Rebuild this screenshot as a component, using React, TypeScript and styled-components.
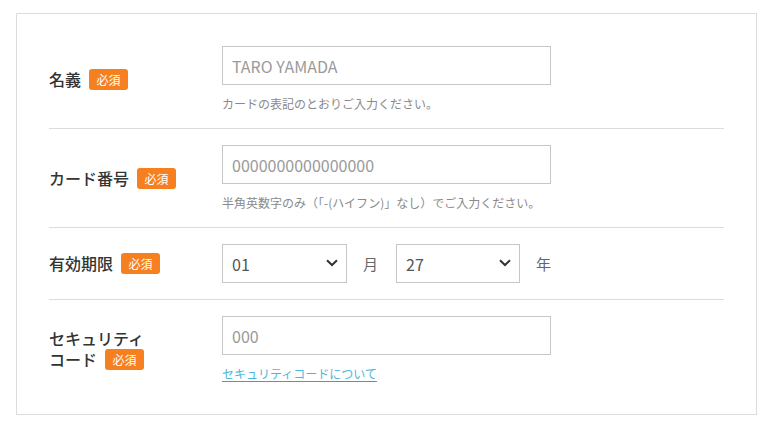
import React from "react";
import styled, { createGlobalStyle } from "styled-components";

const Global = createGlobalStyle`
  html, body { margin: 0; padding: 0; background: #fff; }
  body { font-family: "Noto Sans CJK JP", "Noto Sans", sans-serif; color: #333; }
  * { box-sizing: border-box; }
`;

const Page = styled.div`
  padding: 13px 14px 11px 16px;
`;

const Box = styled.div`
  border: 1px solid #dcdcdc;
  padding: 16px 32px;
`;

const Row = styled.div<{ $last?: boolean }>`
  display: flex;
  align-items: center;
  padding: 16px 0;
  border-bottom: ${(p) => (p.$last ? "none" : "1px solid #dcdcdc")};
`;

const LabelCol = styled.div`
  width: 173px;
  flex-shrink: 0;
  font-size: 16px;
  font-weight: 500;
  line-height: 21px;
  color: #333;
`;

const Badge = styled.span`
  display: inline-block;
  margin-left: 8px;
  padding: 0 7.5px;
  height: 21px;
  line-height: 21px;
  font-size: 12px;
  font-weight: 400;
  color: #fff;
  background: #f6801f;
  border-radius: 3px;
  vertical-align: top;
`;

const FieldCol = styled.div`
  flex: 1;
  display: flex;
  flex-direction: column;
  align-items: flex-start;
`;

const TextInput = styled.input`
  width: 329px;
  height: 39px;
  border: 1px solid #c6c6c6;
  border-radius: 0;
  padding: 0 9px;
  font-family: inherit;
  font-size: 16px;
  color: #555;
  outline: none;
  &::placeholder { color: #9a9a9a; }
`;

const Help = styled.p`
  margin: 10px 0 0;
  font-size: 12px;
  line-height: 17px;
  color: #8a8a8a;
`;

const HelpLink = styled.a`
  margin-top: 10px;
  font-size: 12px;
  line-height: 17px;
  color: #4cb7dc;
  text-decoration: underline;
  text-decoration-color: #22a9d1;
  text-underline-offset: 2px;
`;

const DateLine = styled.div`
  display: flex;
  align-items: center;
`;

const SelectWrap = styled.div<{ $w: number }>`
  position: relative;
  width: ${(p) => p.$w}px;
  height: 39px;
`;

const Select = styled.select`
  appearance: none;
  -webkit-appearance: none;
  width: 100%;
  height: 100%;
  border: 1px solid #c6c6c6;
  border-radius: 0;
  background: #fff;
  padding: 0 9px;
  font-family: inherit;
  font-size: 16px;
  color: #555;
  outline: none;
`;

const Chevron = styled.svg`
  position: absolute;
  right: 9px;
  top: 15px;
  pointer-events: none;
`;

const Unit = styled.span<{ $ml: number; $mr: number }>`
  margin: 0 ${(p) => p.$mr}px 0 ${(p) => p.$ml}px;
  font-size: 15px;
  color: #666;
`;

const DateSelect = ({ w, value, options }: { w: number; value: string; options: string[] }) => (
  <SelectWrap $w={w}>
    <Select defaultValue={value}>
      {options.map((o) => (
        <option key={o} value={o}>
          {o}
        </option>
      ))}
    </Select>
    <Chevron width="12" height="8" viewBox="0 0 12 8">
      <path d="M1 1.2 L6 6 L11 1.2" fill="none" stroke="#333" strokeWidth="2" />
    </Chevron>
  </SelectWrap>
);

const months = Array.from({ length: 12 }, (_, i) => String(i + 1).padStart(2, "0"));
const years = Array.from({ length: 11 }, (_, i) => String(24 + i));

export default function App() {
  return (
    <Page>
      <Global />
      <Box>
        <Row>
          <LabelCol>
            名義<Badge>必須</Badge>
          </LabelCol>
          <FieldCol>
            <TextInput placeholder="TARO YAMADA" />
            <Help>カードの表記のとおりご入力ください。</Help>
          </FieldCol>
        </Row>
        <Row>
          <LabelCol>
            カード番号<Badge>必須</Badge>
          </LabelCol>
          <FieldCol>
            <TextInput placeholder="0000000000000000" />
            <Help>半角英数字のみ（「-(ハイフン)」なし）でご入力ください。</Help>
          </FieldCol>
        </Row>
        <Row>
          <LabelCol>
            有効期限<Badge>必須</Badge>
          </LabelCol>
          <FieldCol>
            <DateLine>
              <DateSelect w={125} value="01" options={months} />
              <Unit $ml={16} $mr={18}>月</Unit>
              <DateSelect w={124} value="27" options={years} />
              <Unit $ml={16} $mr={0}>年</Unit>
            </DateLine>
          </FieldCol>
        </Row>
        <Row $last>
          <LabelCol>
            セキュリティ
            <br />
            コード<Badge>必須</Badge>
          </LabelCol>
          <FieldCol>
            <TextInput placeholder="000" />
            <HelpLink href="#">セキュリティコードについて</HelpLink>
          </FieldCol>
        </Row>
      </Box>
    </Page>
  );
}
